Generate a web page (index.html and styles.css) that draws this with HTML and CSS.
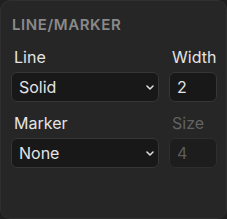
FILE: index.html
```html
<!DOCTYPE html>
<html>
<head>
    <title>Line/Marker</title>
    <link rel="stylesheet" href="styles.css">
</head>
<body>
    <div class="panel">
        <h2 class="panel-title">LINE/MARKER</h2>

        <div class="field-grid">
            <label class="field-label" for="lineStyle">Line</label>
            <label class="field-label" for="lineWidth">Width</label>

            <div class="select-wrap">
                <select id="lineStyle" class="field">
                    <option>Solid</option>
                    <option>Dashed</option>
                    <option>Dotted</option>
                </select>
                <svg class="chevron" width="8" height="5" viewBox="0 0 8 5">
                    <path d="M1 1 L4 4 L7 1" fill="none" stroke="#e0e0e0" stroke-width="1.5" stroke-linecap="round" stroke-linejoin="round"/>
                </svg>
            </div>
            <input id="lineWidth" class="field" type="text" value="2">

            <label class="field-label row-gap" for="markerType">Marker</label>
            <label class="field-label row-gap disabled" for="markerSize">Size</label>

            <div class="select-wrap">
                <select id="markerType" class="field">
                    <option>None</option>
                    <option>Circle</option>
                    <option>Square</option>
                </select>
                <svg class="chevron" width="8" height="5" viewBox="0 0 8 5">
                    <path d="M1 1 L4 4 L7 1" fill="none" stroke="#e0e0e0" stroke-width="1.5" stroke-linecap="round" stroke-linejoin="round"/>
                </svg>
            </div>
            <input id="markerSize" class="field" type="text" value="4" disabled>
        </div>
    </div>
</body>
</html>
```

FILE: styles.css
```css
body {
    margin: 0;
    background-color: #1f1f1f;
    font-family: Inter, "Noto Sans", sans-serif;
}

.panel {
    box-sizing: border-box;
    width: 227px;
    height: 219px;
    background-color: #262626;
    border: 1px solid #303030;
    border-radius: 10px;
    padding: 14px 10px 0 10px;
}

.panel-title {
    margin: 0 0 12px 1px;
    font-size: 15px;
    line-height: 20px;
    font-weight: 600;
    color: #8a8a8a;
    letter-spacing: 0.6px;
}

.field-grid {
    display: grid;
    grid-template-columns: 148px 48px;
    column-gap: 10px;
}

.field-label {
    font-size: 16px;
    line-height: 20px;
    color: #e4e4e4;
    padding-left: 3px;
    margin-bottom: 5px;
}

.field-label.row-gap {
    margin-top: 11px;
}

.field-label.disabled {
    color: #626262;
}

.select-wrap {
    position: relative;
}

.field {
    box-sizing: border-box;
    width: 100%;
    height: 30px;
    margin: 0;
    padding: 0 0 0 7px;
    background-color: #181818;
    border: 1px solid #363636;
    border-radius: 6px;
    color: #e4e4e4;
    font-family: inherit;
    font-size: 16px;
    outline: none;
    appearance: none;
    -webkit-appearance: none;
}

.field:disabled {
    background-color: #1d1d1d;
    border-color: #2e2e2e;
    color: #5c5c5c;
}

.chevron {
    position: absolute;
    right: 5px;
    top: 13px;
    pointer-events: none;
}
```
